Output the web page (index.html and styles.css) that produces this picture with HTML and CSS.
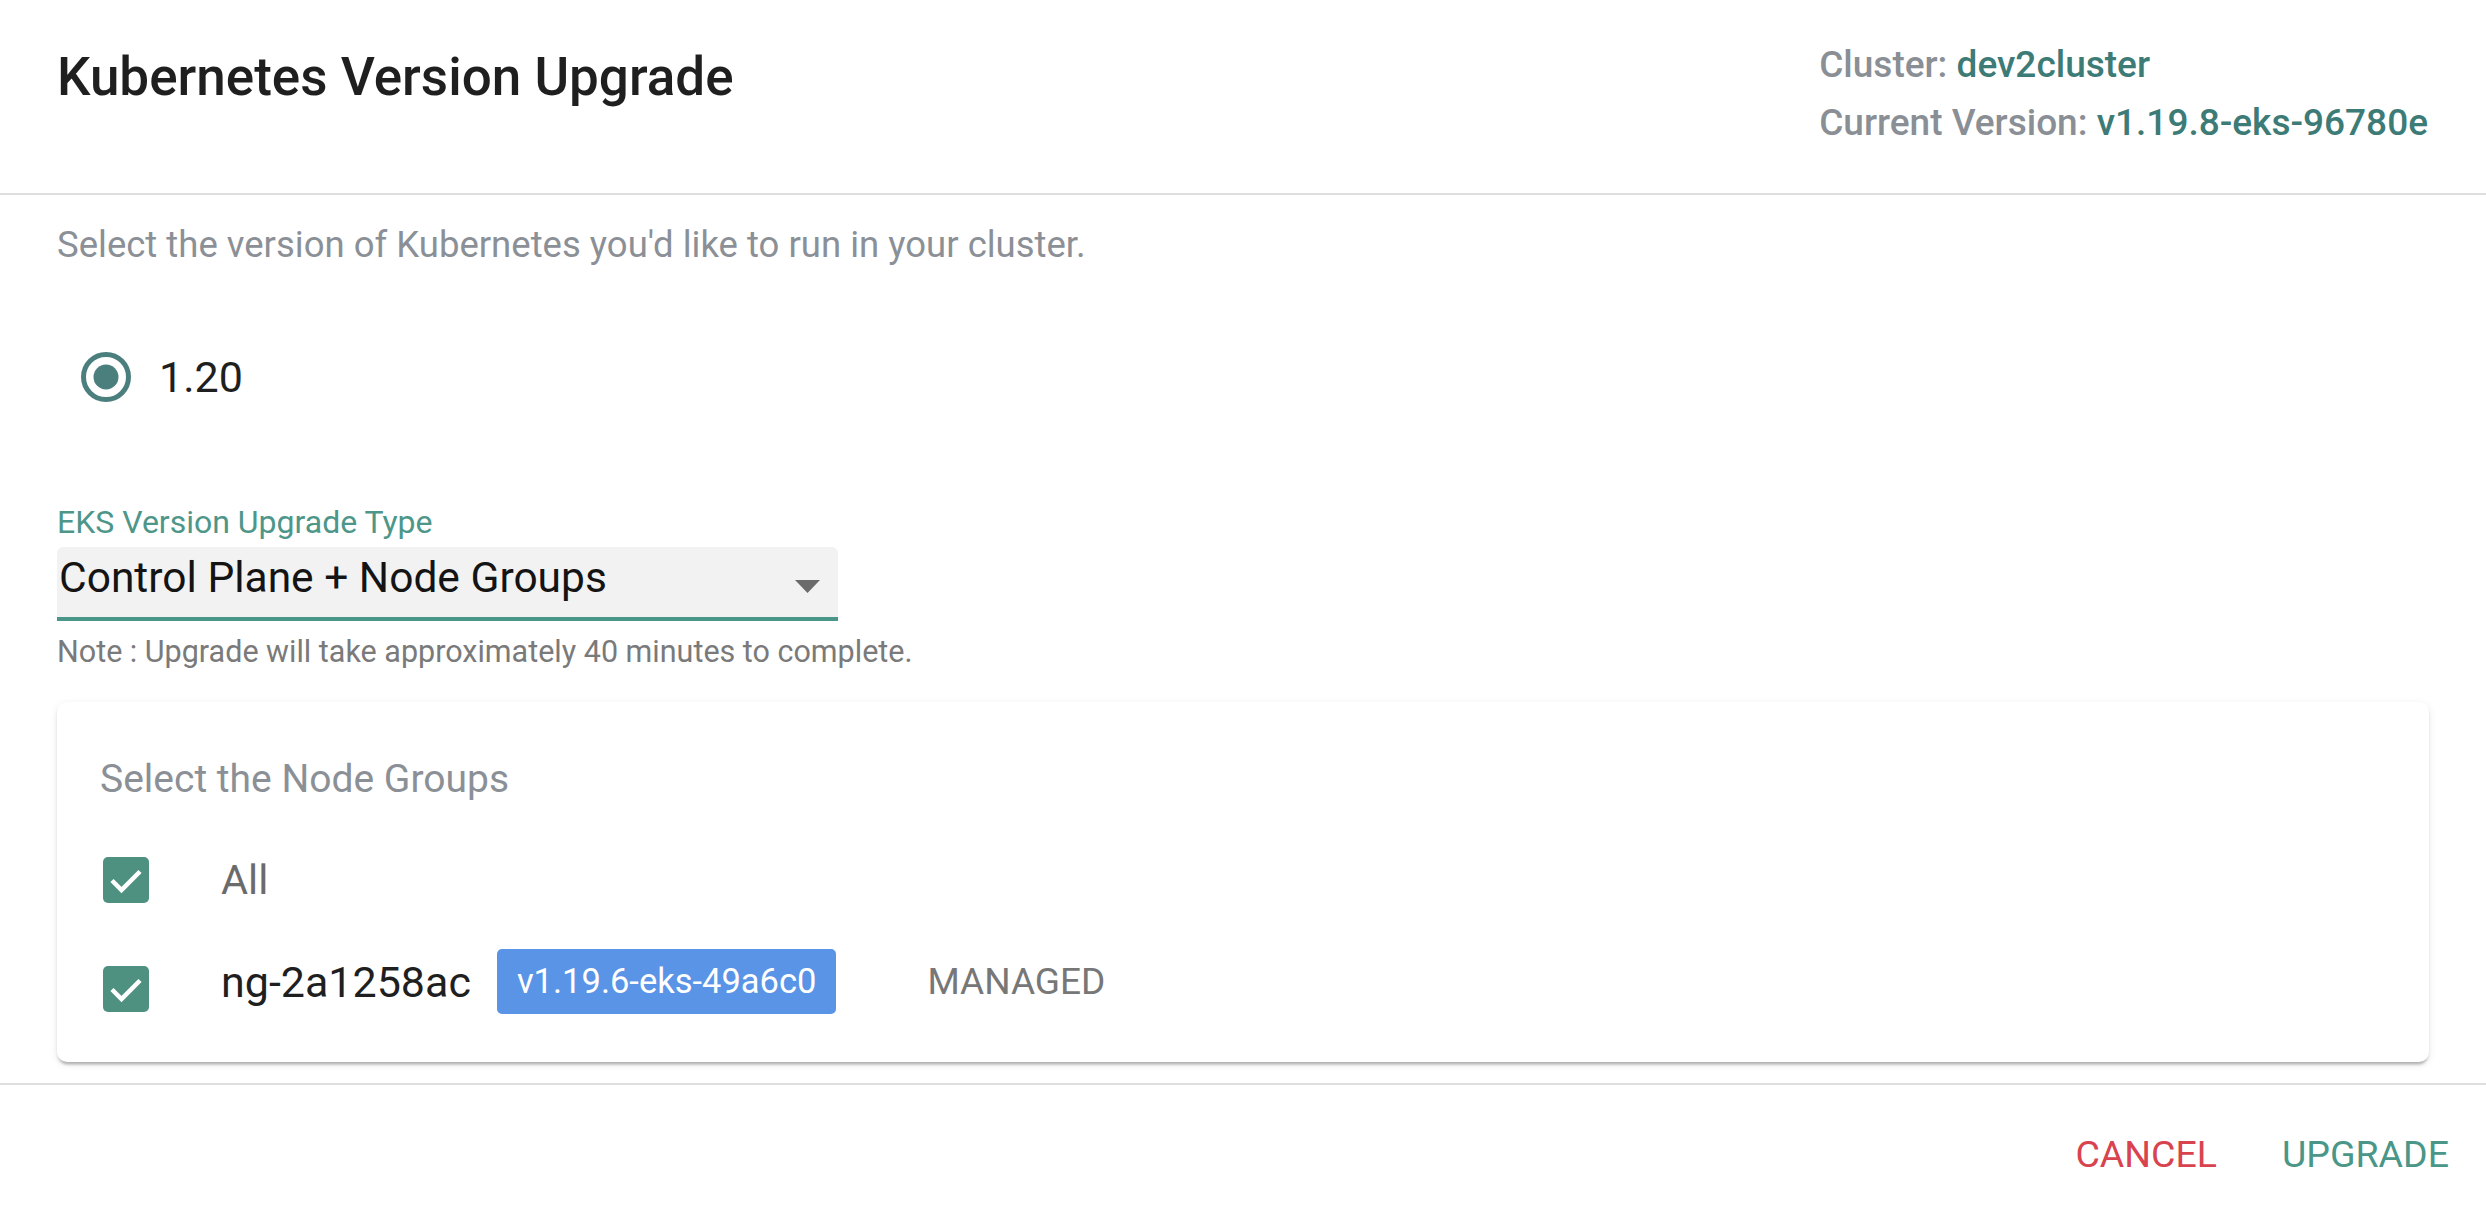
FILE: index.html
```html
<!DOCTYPE html>
<html lang="en">
<head>
<meta charset="utf-8">
<title>Kubernetes Version Upgrade</title>
<link rel="stylesheet" href="styles.css">
</head>
<body>
<div class="dialog">
  <header class="dlg-head">
    <h1 class="title">Kubernetes Version Upgrade</h1>
    <div class="meta">
      <div class="meta-row"><span class="k">Cluster:</span> <span class="v">dev2cluster</span></div>
      <div class="meta-row"><span class="k">Current Version:</span> <span class="v">v1.19.8-eks-96780e</span></div>
    </div>
  </header>

  <main class="dlg-body">
    <p class="intro">Select the version of Kubernetes you'd like to run in your cluster.</p>

    <label class="radio-row">
      <svg class="radio" viewBox="0 0 50 50" width="50" height="50" aria-hidden="true">
        <circle cx="25" cy="25" r="22.5" fill="none" stroke="#4a7f7d" stroke-width="5"/>
        <circle cx="25" cy="25" r="12.5" fill="#4a7f7d"/>
      </svg>
      <span class="radio-text">1.20</span>
    </label>

    <div class="field">
      <div class="field-label">EKS Version Upgrade Type</div>
      <div class="select">
        <span class="select-value">Control Plane + Node Groups</span>
        <svg class="select-arrow" viewBox="0 0 25 13" width="25" height="13" aria-hidden="true">
          <path d="M0 0 H25 L12.5 13 Z" fill="#6b6b6b"/>
        </svg>
      </div>
    </div>

    <p class="note">Note : Upgrade will take approximately 40 minutes to complete.</p>

    <section class="card">
      <div class="card-title">Select the Node Groups</div>
      <div class="ng-row row-all">
        <svg class="checkbox" viewBox="0 0 46 46" width="46" height="46" aria-hidden="true">
          <rect width="46" height="46" rx="5" fill="#4f9181"/>
          <path d="M9 23.5 L18.5 33 L37 14.5" fill="none" stroke="#fff" stroke-width="4.5"/>
        </svg>
        <span class="all-label">All</span>
      </div>
      <div class="ng-row row-ng">
        <svg class="checkbox" viewBox="0 0 46 46" width="46" height="46" aria-hidden="true">
          <rect width="46" height="46" rx="5" fill="#4f9181"/>
          <path d="M9 23.5 L18.5 33 L37 14.5" fill="none" stroke="#fff" stroke-width="4.5"/>
        </svg>
        <span class="ng-name">ng-2a1258ac</span>
        <span class="badge">v1.19.6-eks-49a6c0</span>
        <span class="managed">MANAGED</span>
      </div>
    </section>
  </main>

  <footer class="dlg-foot">
    <button class="btn btn-cancel" type="button">CANCEL</button>
    <button class="btn btn-upgrade" type="button">UPGRADE</button>
  </footer>
</div>
</body>
</html>
```
FILE: styles.css
```css
html, body {
  margin: 0;
  padding: 0;
  background: #ffffff;
}

body {
  font-family: Roboto, "Liberation Sans", Arial, sans-serif;
  color: #212121;
}

.dialog {
  width: 2486px;
  height: 1216px;
  display: flex;
  flex-direction: column;
  overflow: hidden;
}

/* ---------- header ---------- */
.dlg-head {
  display: flex;
  justify-content: space-between;
  align-items: flex-start;
  padding: 36px 58px 41px 57px;
  border-bottom: 2px solid #dedede;
}

.title {
  margin: 9px 0 0;
  font-size: 53px;
  font-weight: 500;
  line-height: 64px;
  color: #1f1f1f;
}

.meta {
  font-size: 37px;
  font-weight: 500;
  line-height: 58px;
  color: #8a8f96;
}

.meta .v {
  color: #3d7b77;
}

/* ---------- body ---------- */
.dlg-body {
  display: flex;
  flex-direction: column;
  align-items: flex-start;
  padding: 28px 57px 21px;
}

.intro {
  margin: 0;
  font-size: 36.5px;
  line-height: 44px;
  color: #8b9097;
}

.radio-row {
  display: flex;
  align-items: center;
  gap: 28px;
  height: 50px;
  margin: 85px 0 0 24px;
  font-size: 43px;
  line-height: 50px;
  color: #1f1f1f;
}

.radio {
  display: block;
  flex: none;
}

.field {
  margin-top: 101px;
}

.field-label {
  font-size: 32px;
  line-height: 38px;
  color: #4d9689;
}

.select {
  box-sizing: border-box;
  width: 781px;
  height: 74px;
  margin-top: 6px;
  padding: 6px 18px 14px 2px;
  display: flex;
  align-items: center;
  justify-content: space-between;
  background: #f2f2f2;
  border-bottom: 4px solid #4a9688;
  border-radius: 6px 6px 0 0;
}

.select-value {
  font-size: 42.5px;
  line-height: 50px;
  color: #141414;
}

.select-arrow {
  display: block;
  margin-top: 16px;
}

.note {
  margin: 13px 0 0;
  font-size: 30.5px;
  line-height: 36px;
  color: #7a7a7a;
}

/* ---------- node group card ---------- */
.card {
  align-self: stretch;
  margin-top: 32px;
  padding: 53px 40px 48px 43px;
  border-radius: 10px;
  background: #fff;
  box-shadow: 0 5px 3px -3px rgba(0, 0, 0, 0.2),
              0 3px 3px 0 rgba(0, 0, 0, 0.10),
              0 2px 8px 0 rgba(0, 0, 0, 0.08);
}

.card-title {
  font-size: 39px;
  line-height: 48px;
  color: #8b9097;
}

.ng-row {
  display: flex;
  align-items: center;
}

.row-all {
  height: 46px;
  margin-top: 54px;
}

.row-ng {
  height: 65px;
  margin-top: 46px;
}

.checkbox {
  display: block;
  flex: none;
  margin: 0 72px 0 3px;
}

.row-ng .checkbox {
  margin-top: 14px;
}

.all-label {
  font-size: 41.5px;
  line-height: 46px;
  color: #6b6b6b;
}

.ng-name {
  font-size: 43px;
  line-height: 50px;
  color: #1f1f1f;
}

.badge {
  margin-left: 26px;
  padding: 0 20px;
  height: 65px;
  line-height: 65px;
  font-size: 34.5px;
  color: #ffffff;
  background: #5a94e6;
  border-radius: 5px;
}

.managed {
  margin-left: 91px;
  font-size: 37px;
  color: #777777;
}

/* ---------- footer ---------- */
.dlg-foot {
  flex: 1;
  display: flex;
  justify-content: flex-end;
  align-items: flex-start;
  gap: 33px;
  padding: 47px 21px 0;
  border-top: 2px solid #dedede;
}

.btn {
  padding: 0 16px;
  border: 0;
  background: none;
  font-family: inherit;
  font-size: 37.5px;
  font-weight: 400;
  line-height: 44px;
  cursor: pointer;
}

.btn-cancel {
  color: #d8434f;
}

.btn-upgrade {
  color: #4a9688;
}
```
